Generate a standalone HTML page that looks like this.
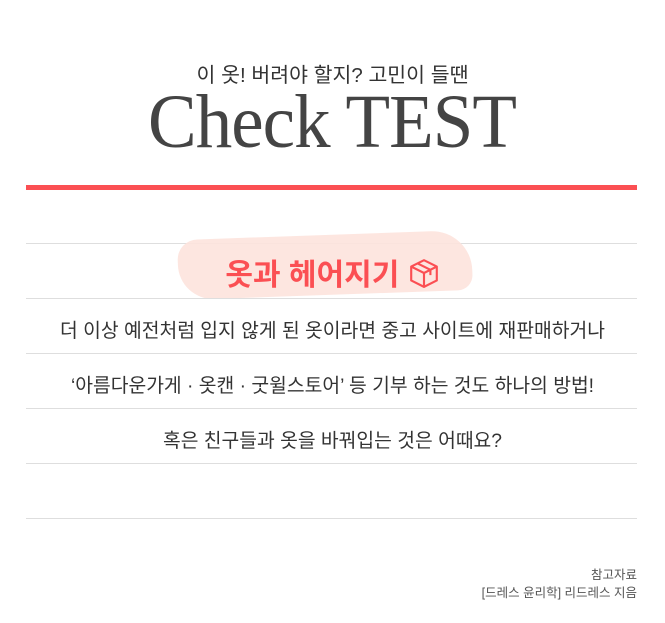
<!DOCTYPE html>
<html><head><meta charset="utf-8"><style>
body{margin:0;width:665px;height:623px;background:#fff;position:relative;overflow:hidden;font-family:"Liberation Sans","Noto Sans CJK KR",sans-serif;color:#333}
.a{position:absolute}
.sub{left:0;width:665px;top:58px;text-align:center;font-size:20.5px;color:#333}
.title{left:148px;top:84px;font-family:"Liberation Serif",serif;font-size:76px;line-height:1;color:#444;letter-spacing:-1px;white-space:nowrap;transform-origin:left top;transform:scaleX(0.96);}
.bar{left:26px;top:185px;width:611px;height:5px;background:#fb4f53}
.line{left:26px;width:611px;height:1px;background:#dedede}
.t{left:0;width:665px;text-align:center;font-size:19.3px;color:#333}
.brush{left:178px;top:235px;width:294px;height:60px;background:#fde3dd;border-radius:20px 40px 15px 35px;transform:rotate(-2deg);opacity:.9}
.head{left:0;width:665px;top:250px;text-align:center;font-size:30px;font-weight:bold;color:#fb4f53}
.ref{right:28px;text-align:right;font-size:12.5px;color:#555}
</style></head><body>
<div class="a sub">이 옷! 버려야 할지? 고민이 들땐</div>
<div class="a title">Check TEST</div>
<div class="a bar"></div>
<div class="a line" style="top:243px"></div>
<div class="a brush"></div>
<div class="a head">옷과 헤어지기 <svg width="32" height="32" viewBox="0 0 30 30" style="vertical-align:-4px" fill="none" stroke="#fb4f53" stroke-width="2" stroke-linejoin="round"><path d="M15 3 L27 9 L27 22 L15 28 L3 22 L3 9 Z M3 9 L15 15 L27 9 M15 15 L15 28 M9 6 L21 12 L21 17"/></svg></div>
<div class="a line" style="top:298px"></div>
<div class="a t" style="top:315px">더 이상 예전처럼 입지 않게 된 옷이라면 중고 사이트에 재판매하거나</div>
<div class="a line" style="top:353px"></div>
<div class="a t" style="top:370px">‘아름다운가게 · 옷캔 · 굿윌스토어’ 등 기부 하는 것도 하나의 방법!</div>
<div class="a line" style="top:408px"></div>
<div class="a t" style="top:425px">혹은 친구들과 옷을 바꿔입는 것은 어때요?</div>
<div class="a line" style="top:463px"></div>
<div class="a line" style="top:518px"></div>
<div class="a ref" style="top:564px">참고자료</div>
<div class="a ref" style="top:582px">[드레스 윤리학] 리드레스 지음</div>
</body></html>
